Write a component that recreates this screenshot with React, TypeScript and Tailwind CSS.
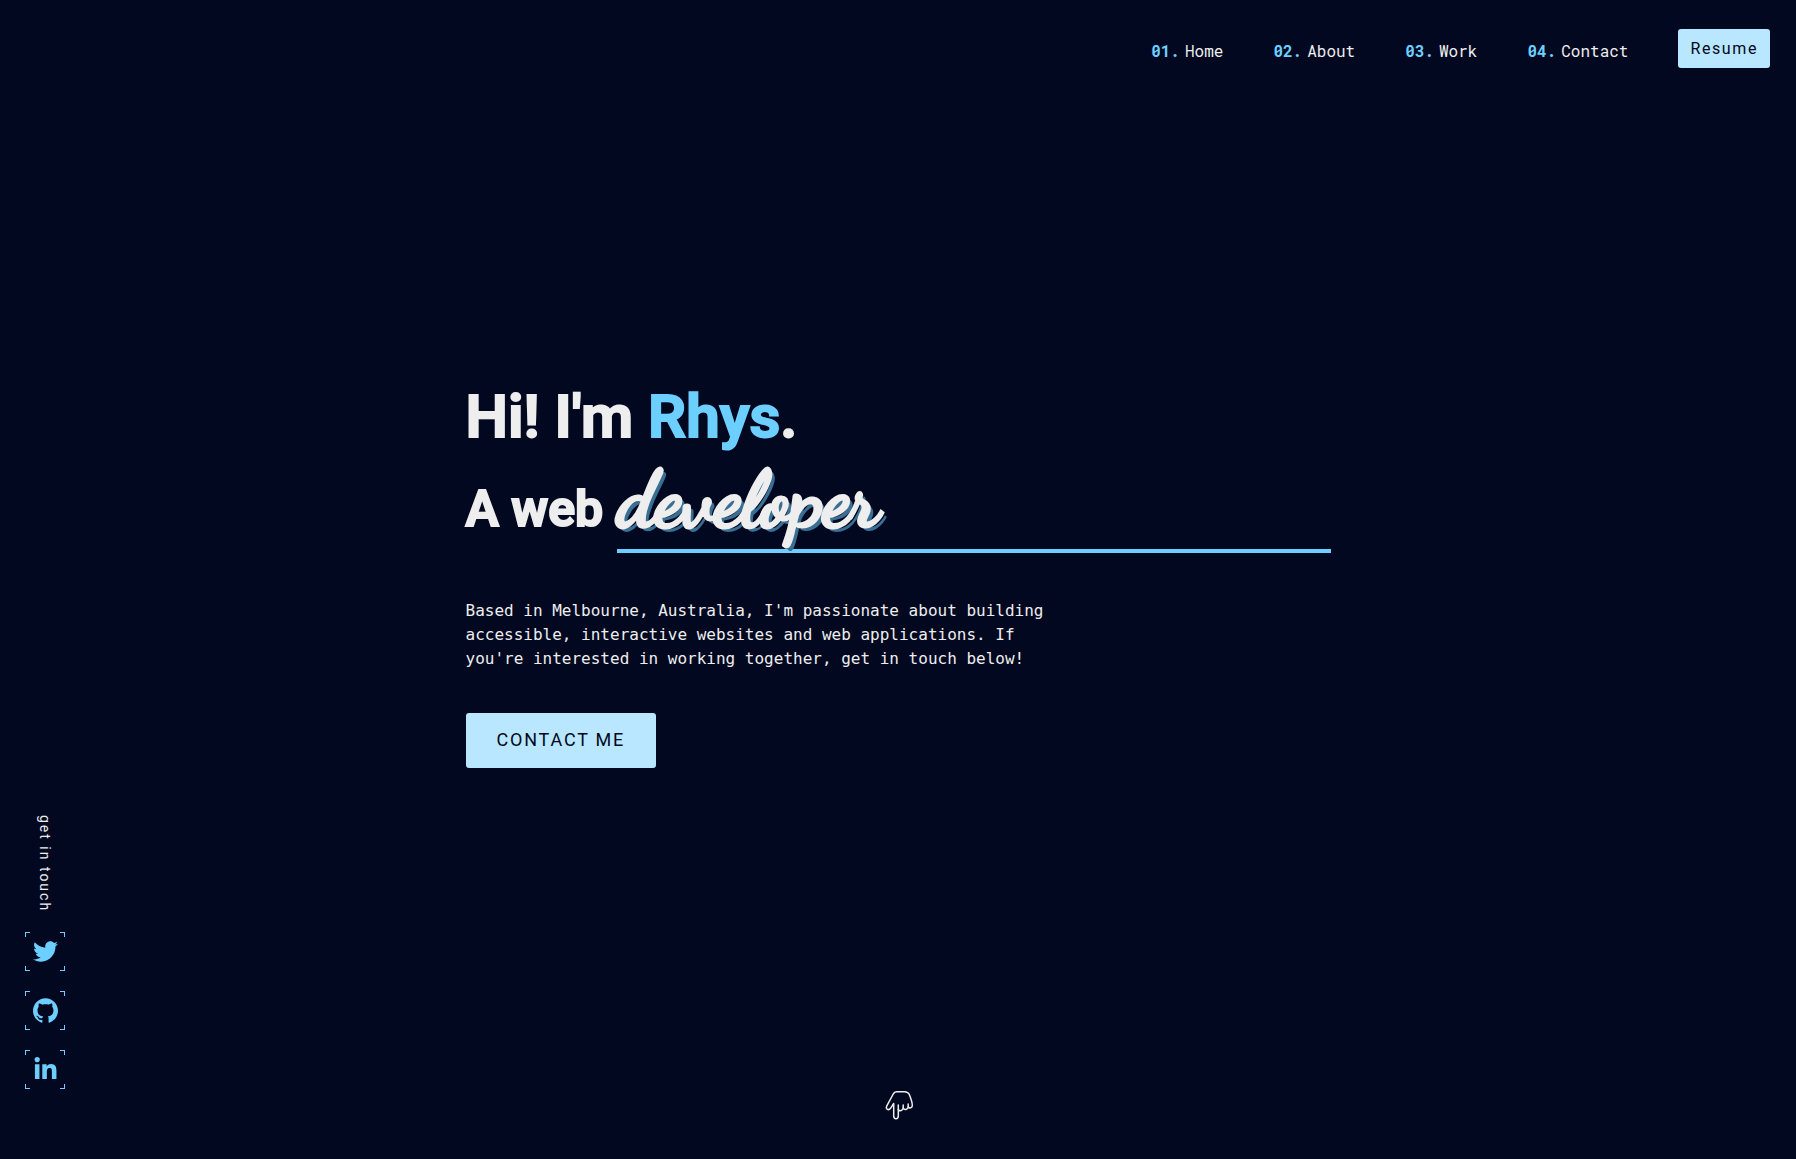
import { FaTwitter, FaLinkedinIn } from "react-icons/fa";
import { SiGithub } from "react-icons/si";
import type { ReactNode } from "react";

const links = [
  { number: "01.", label: "Home" },
  { number: "02.", label: "About" },
  { number: "03.", label: "Work" },
  { number: "04.", label: "Contact" },
];

function SocialLink({ label, children }: { label: string; children: ReactNode }) {
  return (
    <a
      href="#"
      aria-label={label}
      className="relative flex h-[39px] w-10 items-center justify-center text-[#6ccfff]"
    >
      <span className="absolute left-0 top-0 size-[5px] border-l border-t border-current" />
      <span className="absolute right-0 top-0 size-[5px] border-r border-t border-current" />
      <span className="absolute bottom-0 left-0 size-[5px] border-b border-l border-current" />
      <span className="absolute bottom-0 right-0 size-[5px] border-b border-r border-current" />
      {children}
    </a>
  );
}

export default function App() {
  return (
    <div className="relative flex min-h-screen flex-col bg-[#020820] font-['Roboto',sans-serif] text-[#eeeeee]">
      <header className="flex justify-end px-[26px] pt-[29px]">
        <nav className="flex items-center gap-[50px]">
          {links.map((link) => (
            <a
              key={link.label}
              href="#"
              className="flex gap-[5px] pt-1 font-['Roboto_Mono','DejaVu_Sans_Mono',monospace] text-base leading-6"
            >
              <span className="font-bold text-[#6ccfff]">{link.number}</span>
              <span>{link.label}</span>
            </a>
          ))}
          <button className="h-[39px] rounded-[3px] bg-[#b8e7ff] px-3 text-base tracking-widest text-[#020820]">
            Resume
          </button>
        </nav>
      </header>

      <main className="flex flex-1 flex-col items-center justify-center px-6 pb-3">
        <div className="w-full max-w-[865px]">
          <h1 className="text-6xl font-semibold leading-[76px] [-webkit-text-stroke:2px_currentColor]">
            Hi! I'm <span className="text-[#6ccfff]">Rhys</span>.
          </h1>
          <h2 className="flex items-end gap-[14px] text-[50px] font-semibold leading-[64px]">
            <span className="pb-3 [-webkit-text-stroke:2px_currentColor]">A web</span>
            <span className="flex-1 border-b-4 border-[#6ccfff] pb-1 font-['Dancing_Script',cursive] text-[79px] font-bold leading-[90px] [-webkit-text-stroke:3px_#eeeeee] [text-shadow:4px_4px_0_#3a6f94]">
              developer
            </span>
          </h2>
          <p className="mt-[46px] max-w-[600px] font-['DejaVu_Sans_Mono',monospace] text-base leading-6">
            Based in Melbourne, Australia, I'm passionate about building accessible, interactive
            websites and web applications. If you're interested in working together, get in touch
            below!
          </p>
          <button className="mt-[42px] h-[55px] rounded-[3px] bg-[#b8e7ff] px-[31px] text-lg uppercase tracking-widest text-[#020820]">
            Contact me
          </button>
        </div>
      </main>

      <footer className="flex justify-center pb-[37px] pl-1">
        <a href="#" aria-label="Scroll down">
          <svg
            width="30"
            height="32"
            viewBox="0 0 30 32"
            fill="none"
            stroke="currentColor"
            strokeWidth="1.5"
            strokeLinejoin="round"
            strokeLinecap="round"
          >
            <path d="M8.5 3.5 C9.5 2.2 10.5 1.8 12 1.8 H19.5 C22 1.8 23.5 2.6 24.5 5 C25.6 7.7 27.3 12 27.3 15.5 C27.3 18 24.5 18.8 23.2 16.8 C23 19.8 19.3 20.6 18.2 18 C17.8 20.8 14.8 21.6 13.3 19.5 V26 C13.3 29.5 8.7 29.5 8.7 26 V13.5 L5.5 18.3 C3.6 21 0.4 19 1.7 16.2 Z" />
            <path d="M13.3 19.5 V15 M18.2 18 V15 M23.2 16.8 V14" />
          </svg>
        </a>
      </footer>

      <aside className="absolute bottom-[70px] left-[25px] flex flex-col items-center gap-5">
        <p className="text-sm leading-4 tracking-[2px] [writing-mode:vertical-rl]">get in touch</p>
        <SocialLink label="Twitter">
          <FaTwitter size={25} />
        </SocialLink>
        <SocialLink label="GitHub">
          <SiGithub size={25} />
        </SocialLink>
        <SocialLink label="LinkedIn">
          <FaLinkedinIn size={25} />
        </SocialLink>
      </aside>
    </div>
  );
}
